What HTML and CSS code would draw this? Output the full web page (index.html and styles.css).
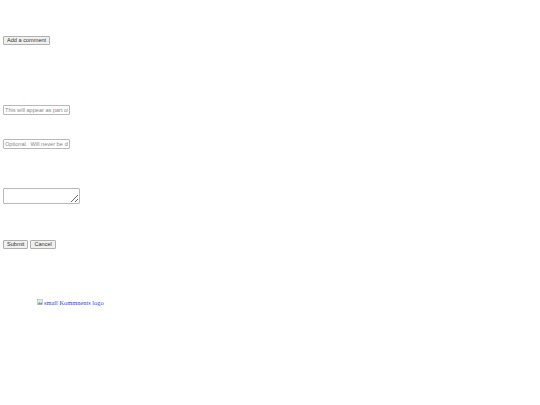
FILE: index.html
```html
<!DOCTYPE html>
<html>
<head>
<meta charset="utf-8">
<title>Comments</title>
<link rel="stylesheet" href="styles.css">
</head>
<body>
<div class="page">
  <div class="row row-add"><button class="btn" type="button">Add a comment</button></div>
  <form class="form">
    <div class="row row-name"><input class="field" type="text" placeholder="This will appear as part of the comment"></div>
    <div class="row row-email"><input class="field" type="text" placeholder="Optional.  Will never be displayed"></div>
    <div class="row row-text"><textarea class="area"></textarea></div>
    <div class="row row-actions"><button class="btn" type="button">Submit</button><button class="btn" type="button">Cancel</button></div>
  </form>
  <div class="row row-logo">
    <a class="logo" href="#"><svg class="broken" width="6" height="6" viewBox="0 0 6 6"><rect x="0.3" y="0.3" width="5.4" height="5.4" fill="#dce8f4" stroke="#9fb0c4" stroke-width="0.5"/><path d="M0.5 5.5l2-2.5 1.2 1.3 1-1 0.8 2.2z" fill="#6fae5a"/></svg>small Kommnents logo</a>
  </div>
</div>
</body>
</html>
```
FILE: styles.css
```css
html, body {
  margin: 0;
  padding: 0;
  background: #ffffff;
}
.page {
  padding: 0 3px;
  display: flex;
  flex-direction: column;
  align-items: flex-start;
}
.form {
  display: flex;
  flex-direction: column;
  align-items: flex-start;
  margin: 0;
}
.row {
  display: flex;
  align-items: flex-start;
  gap: 2px;
}
.btn {
  font-family: "Liberation Sans", Arial, sans-serif;
  font-size: 5.6px;
  line-height: 7px;
  height: 9px;
  padding: 0 3px;
  margin: 0;
  color: #333;
  background: #f0f0f0;
  border: 1px solid #b0b0b0;
  border-radius: 1px;
}
.field {
  font-family: "Liberation Sans", Arial, sans-serif;
  font-size: 5.6px;
  width: 67px;
  height: 10px;
  box-sizing: border-box;
  padding: 0 1px;
  margin: 0;
  border: 1px solid #b8b8b8;
  border-radius: 1px;
  outline: none;
}
.field::placeholder {
  color: #8a8a8a;
}
.area {
  width: 77px;
  height: 16px;
  box-sizing: border-box;
  margin: 0;
  padding: 1px;
  border: 1px solid #b8b8b8;
  border-radius: 1px;
  font-size: 5.6px;
  outline: none;
}
.row-add { margin-top: 36px; }
.row-name { margin-top: 60px; }
.row-email { margin-top: 24px; }
.row-text { margin-top: 39px; }
.row-actions { margin-top: 36px; }
.row-logo {
  margin-top: 50px;
  padding-left: 34px;
}
.logo {
  font-family: "Liberation Serif", "Times New Roman", serif;
  font-size: 6.4px;
  color: #3344ee;
  text-decoration: underline;
  display: inline-flex;
  align-items: flex-end;
}
.broken {
  margin-right: 1px;
  margin-bottom: 1px;
}
```
